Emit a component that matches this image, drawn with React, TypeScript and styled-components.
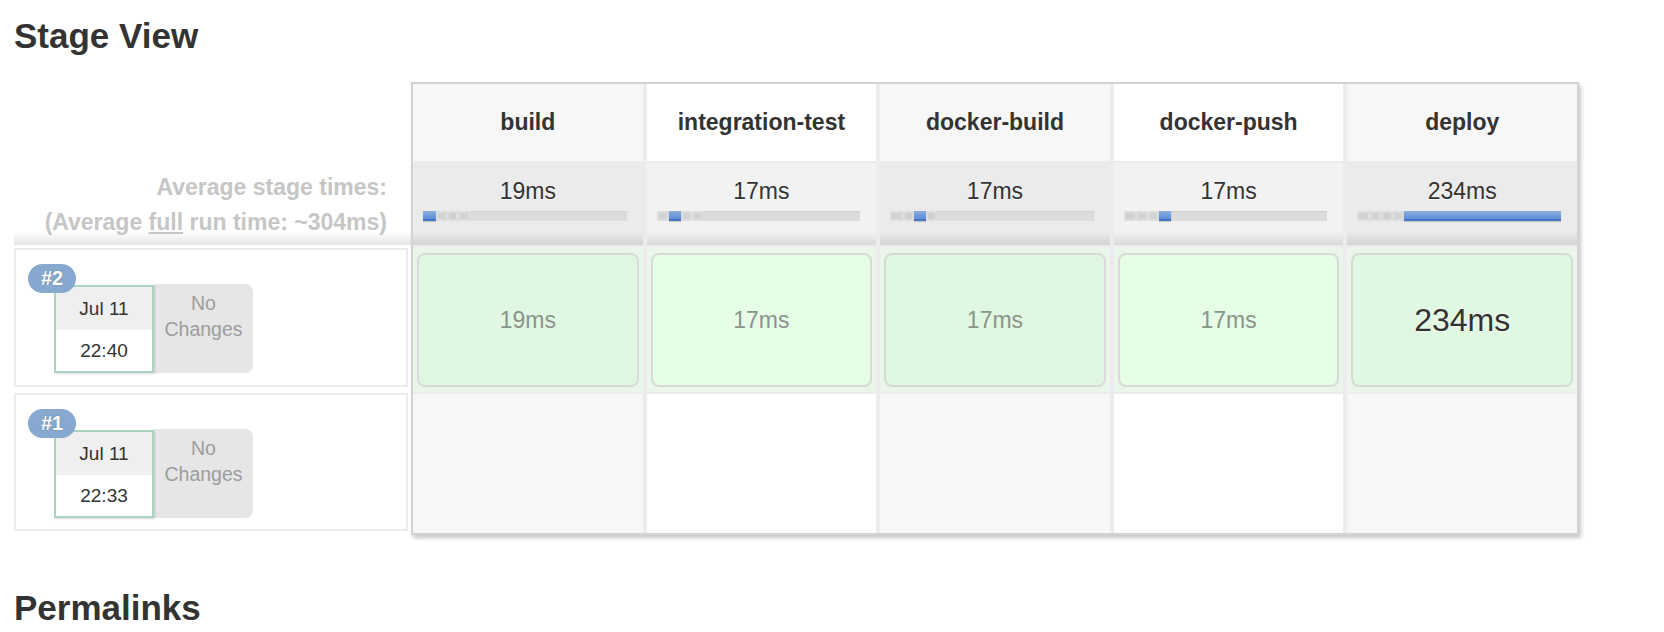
import styled, { createGlobalStyle } from 'styled-components';

const GlobalStyle = createGlobalStyle`
  body {
    margin: 0;
    background: #fff;
    color: #333;
    font-family: "Liberation Sans", Helvetica, Arial, sans-serif;
  }
`;

interface Stage {
  name: string;
  avg: string;
  ms: number;
}

interface Run {
  id: number;
  date: string;
  time: string;
  durations: number[] | null;
}

const stages: Stage[] = [
  { name: 'build', avg: '19ms', ms: 19 },
  { name: 'integration-test', avg: '17ms', ms: 17 },
  { name: 'docker-build', avg: '17ms', ms: 17 },
  { name: 'docker-push', avg: '17ms', ms: 17 },
  { name: 'deploy', avg: '234ms', ms: 234 },
];

const runs: Run[] = [
  { id: 2, date: 'Jul 11', time: '22:40', durations: [19, 17, 17, 17, 234] },
  { id: 1, date: 'Jul 11', time: '22:33', durations: null },
];

const totalMs = stages.reduce((sum, s) => sum + s.ms, 0);

const Page = styled.div`
  padding: 16px 0 0 14px;
`;

const Heading = styled.h2<{ $gap?: number }>`
  margin: ${(p) => p.$gap || 0}px 0 0;
  font-size: 35px;
  line-height: 40px;
  font-weight: bold;
  color: #333;
`;

const StageView = styled.div`
  display: flex;
  align-items: flex-start;
  margin-top: 26px;
`;

const LeftCol = styled.div`
  width: 397px;
  flex: none;
  display: flex;
  flex-direction: column;
`;

const HeaderSpacer = styled.div`
  height: 81px;
`;

const AvgLabel = styled.div`
  height: 82px;
  box-sizing: border-box;
  padding: 7px 24px 0 0;
  text-align: right;
  font-size: 23px;
  line-height: 35px;
  font-weight: bold;
  color: #c6c6c6;
  background: linear-gradient(to bottom, #fff calc(100% - 13px), #e4e4e4);
`;

const RunRow = styled.div<{ $height: number; $gap: number }>`
  position: relative;
  box-sizing: border-box;
  width: 394px;
  height: ${(p) => p.$height}px;
  margin-top: ${(p) => p.$gap}px;
  padding: 35px 0 0 38px;
  border: 2px solid #ececec;
  display: flex;
  align-items: flex-start;
`;

const Badge = styled.div`
  position: absolute;
  top: 14px;
  left: 12px;
  z-index: 2;
  width: 48px;
  height: 29px;
  border-radius: 15px;
  background: #88a9cf;
  color: #fff;
  font-size: 20px;
  font-weight: bold;
  line-height: 29px;
  text-align: center;
  text-shadow: 0 0 2px rgba(0, 0, 0, 0.25);
`;

const DateBox = styled.div`
  position: relative;
  z-index: 1;
  box-sizing: border-box;
  width: 100px;
  height: 88px;
  border: 2px solid #a9d5bf;
  background: #fff;
  box-shadow: 1px 1px 2px rgba(0, 0, 0, 0.15);
  font-size: 19px;
  color: #333;
  text-align: center;
`;

const DatePart = styled.div<{ $top?: boolean }>`
  height: ${(p) => (p.$top ? 43 : 41)}px;
  line-height: ${(p) => (p.$top ? 43 : 41)}px;
  background: ${(p) => (p.$top ? '#efefef' : '#fff')};
`;

const ChangesBox = styled.div`
  box-sizing: border-box;
  width: 99px;
  height: 89px;
  margin-top: -1px;
  padding-top: 6px;
  border-radius: 0 8px 8px 0;
  background: #e6e6e6;
  color: #9d9d9d;
  font-size: 19.5px;
  line-height: 26px;
  text-align: center;
`;

const Table = styled.div`
  width: 1168px;
  flex: none;
  box-sizing: border-box;
  display: grid;
  grid-template-columns: repeat(5, 1fr);
  grid-template-rows: 77px 82px 145px 139px;
  column-gap: 4px;
  row-gap: 2px;
  background: #ececec;
  border: 2px solid #d3d3d3;
  box-shadow: 2px 3px 4px rgba(0, 0, 0, 0.22);
`;

const HeaderCell = styled.div<{ $alt: boolean }>`
  display: flex;
  align-items: center;
  justify-content: center;
  background: ${(p) => (p.$alt ? '#fff' : '#f7f7f7')};
  font-size: 23px;
  font-weight: bold;
  color: #333;
`;

const AvgCell = styled.div<{ $alt: boolean }>`
  padding-top: 15px;
  background-color: ${(p) => (p.$alt ? '#f2f2f2' : '#ebebeb')};
  background-image: linear-gradient(to bottom, transparent calc(100% - 13px), rgba(0, 0, 0, 0.1));
  text-align: center;
  font-size: 23px;
  line-height: 26px;
  color: #333;
  text-shadow: 0 1px 0 rgba(255, 255, 255, 0.8);
`;

const Bar = styled.div`
  display: flex;
  height: 10px;
  margin: 7px 16px 0 10px;
  background: #dcdcdc;
  box-shadow: inset 0 1px 1px rgba(0, 0, 0, 0.05);
`;

const Segment = styled.div<{ $active: boolean; $plain: boolean }>`
  height: 100%;
  box-sizing: border-box;
  ${(p) =>
    p.$active
      ? `
    background: linear-gradient(to bottom, #8aaedd, #5e8ed6);
    border-bottom: 2px solid #4674c6;
    box-shadow: 0 1px 1px rgba(0, 0, 0, 0.15);
  `
      : p.$plain
      ? ''
      : `
    background: #d2d2d2;
    box-shadow: inset 0 0 0 2px #dedede;
  `}
`;

const BodyCell = styled.div<{ $alt: boolean; $filled: boolean }>`
  box-sizing: border-box;
  padding: ${(p) => (p.$filled ? '6px 4px 5px' : '0')};
  background: ${(p) => (p.$filled ? '#ebf6eb' : p.$alt ? '#fff' : '#f7f7f7')};
`;

const Card = styled.div<{ $alt: boolean }>`
  height: 100%;
  box-sizing: border-box;
  display: flex;
  align-items: center;
  justify-content: center;
  border: 2px solid #d7dbd7;
  border-radius: 8px;
  background: ${(p) => (p.$alt ? '#e6fde6' : '#e0f7e1')};
`;

const CardText = styled.span<{ $big: boolean }>`
  font-size: ${(p) => (p.$big ? 32 : 23)}px;
  color: ${(p) => (p.$big ? '#333' : '#8a948a')};
  text-shadow: ${(p) => (p.$big ? '0 0 3px #fff' : 'none')};
`;

const fmt = (ms: number) => `${ms}ms`;

const StageBar = ({ active }: { active: number }) => (
  <Bar>
    {stages.map((s, i) => {
      const pct = (s.ms / totalMs) * 100;
      return (
        <Segment
          key={s.name}
          $active={i === active}
          $plain={pct > 30}
          style={{ width: `${pct}%` }}
        />
      );
    })}
  </Bar>
);

const App = () => {
  return (
    <Page>
      <GlobalStyle />
      <Heading>Stage View</Heading>
      <StageView>
        <LeftCol>
          <HeaderSpacer />
          <AvgLabel>
            Average stage times:
            <br />
            (Average <u>full</u> run time: ~304ms)
          </AvgLabel>
          {runs.map((run, i) => (
            <RunRow key={run.id} $height={i === 0 ? 139 : 138} $gap={i === 0 ? 3 : 6}>
              <Badge>#{run.id}</Badge>
              <DateBox>
                <DatePart $top>{run.date}</DatePart>
                <DatePart>{run.time}</DatePart>
              </DateBox>
              <ChangesBox>
                No
                <br />
                Changes
              </ChangesBox>
            </RunRow>
          ))}
        </LeftCol>

        <Table>
          {stages.map((s, i) => (
            <HeaderCell key={`h-${s.name}`} $alt={i % 2 === 1}>
              {s.name}
            </HeaderCell>
          ))}
          {stages.map((s, i) => (
            <AvgCell key={`a-${s.name}`} $alt={i % 2 === 1}>
              {s.avg}
              <StageBar active={i} />
            </AvgCell>
          ))}
          {runs.map((run) =>
            stages.map((s, i) => {
              const ms = run.durations ? run.durations[i] : null;
              return (
                <BodyCell key={`${run.id}-${s.name}`} $alt={i % 2 === 1} $filled={ms !== null}>
                  {ms !== null && (
                    <Card $alt={i % 2 === 1}>
                      <CardText $big={ms > 100}>{fmt(ms)}</CardText>
                    </Card>
                  )}
                </BodyCell>
              );
            })
          )}
        </Table>
      </StageView>
      <Heading $gap={53}>Permalinks</Heading>
    </Page>
  );
};

export default App;
